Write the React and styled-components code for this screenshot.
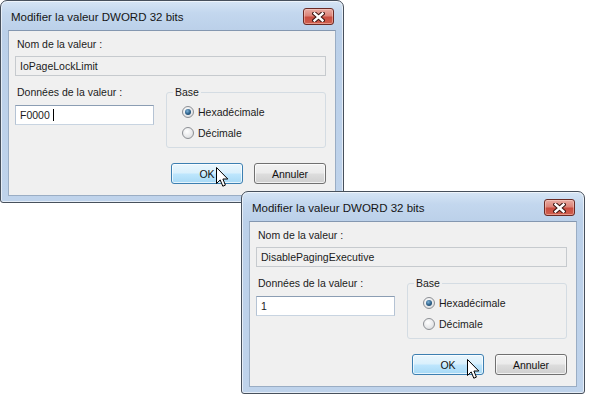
import React from "react";
import styled, { createGlobalStyle } from "styled-components";

const GlobalStyle = createGlobalStyle`
  html, body {
    margin: 0;
    padding: 0;
    background: #ffffff;
  }
  body {
    font-family: "Liberation Sans", Arial, sans-serif;
  }
`;

const Desktop = styled.div`
  position: relative;
  width: 589px;
  height: 399px;
  overflow: hidden;
  background: #ffffff;
`;

const Window = styled.div`
  position: absolute;
  left: ${(p) => p.$x}px;
  top: ${(p) => p.$y}px;
  width: 344px;
  height: 203px;
  box-sizing: border-box;
  border: 1px solid #47505c;
  border-radius: 7px 7px 3px 3px;
  background: linear-gradient(
    180deg,
    #d6e5f5 0px,
    #c3d7ee 12px,
    #bbd0e9 30px,
    #bfd3eb 100%
  );
  box-shadow: inset 0 0 0 1px rgba(255, 255, 255, 0.6);
  display: flex;
  flex-direction: column;
  padding: 0 7px 6px;
`;

const TitleBar = styled.div`
  height: 29px;
  flex: none;
  display: flex;
  align-items: flex-start;
  justify-content: space-between;
`;

const Title = styled.div`
  padding: 9px 0 0 3px;
  font-size: 11.5px;
  line-height: 14px;
  color: #151515;
  white-space: nowrap;
`;

const CloseButton = styled.div`
  margin: 7px 2px 0 0;
  width: 31px;
  height: 17px;
  box-sizing: border-box;
  border: 1px solid #6b2a24;
  border-radius: 3px;
  background: linear-gradient(
    180deg,
    #e9aca3 0%,
    #dc8479 45%,
    #c94d40 55%,
    #d0604f 100%
  );
  box-shadow: inset 0 0 0 1px rgba(255, 220, 210, 0.45);
  display: flex;
  align-items: center;
  justify-content: center;
`;

const Client = styled.div`
  flex: 1;
  background: #f0f0f0;
  border: 1px solid #9aadc4;
  border-top-color: #8497b0;
  padding: 7px 9px 0 6px;
  display: flex;
  flex-direction: column;
  font-size: 10.5px;
  color: #1b1b1b;
`;

const Label = styled.div`
  line-height: 13px;
  height: 13px;
  padding-left: 2px;
  white-space: nowrap;
`;

const NameField = styled.div`
  margin-top: 5px;
  height: 20px;
  box-sizing: border-box;
  border: 1px solid #c6cace;
  background: #f0f0f0;
  padding: 0 4px;
  display: flex;
  align-items: center;
  white-space: nowrap;
`;

const MiddleRow = styled.div`
  margin-top: 10px;
  display: flex;
  justify-content: space-between;
  align-items: flex-start;
`;

const DataColumn = styled.div`
  width: 139px;
  display: flex;
  flex-direction: column;
`;

const ValueInput = styled.div`
  margin-top: 6px;
  height: 20px;
  box-sizing: border-box;
  border: 1px solid;
  border-color: #8b9db3 #b5c3d4 #c8d4e1 #b5c3d4;
  background: #ffffff;
  padding: 0 4px;
  display: flex;
  align-items: center;
`;

const Caret = styled.span`
  display: inline-block;
  width: 1px;
  height: 12px;
  margin-left: 3px;
  background: #000000;
`;

const GroupBox = styled.fieldset`
  width: 160px;
  box-sizing: border-box;
  margin: 0;
  padding: 2px 0 4px 6px;
  border: 1px solid #d4dce3;
  border-radius: 3px;
  min-inline-size: 0;
`;

const Legend = styled.legend`
  padding: 0 2px;
  line-height: 13px;
  font-size: 10.5px;
`;

const RadioRow = styled.div`
  height: 21px;
  margin-left: 9px;
  display: flex;
  align-items: center;
  gap: 4px;
  white-space: nowrap;
`;

const RadioDot = styled.span`
  width: 12px;
  height: 12px;
  box-sizing: border-box;
  border-radius: 50%;
  border: 1px solid #8c8f94;
  background: radial-gradient(circle at 40% 35%, #ffffff 0%, #e6e7e9 60%, #cfd1d4 100%);
  display: flex;
  align-items: center;
  justify-content: center;

  &::after {
    content: "";
    width: 6px;
    height: 6px;
    border-radius: 50%;
    display: ${(p) => (p.$checked ? "block" : "none")};
    background: radial-gradient(circle at 40% 35%, #7fb3d9 0%, #2a5d86 55%, #173a57 100%);
  }
`;

const ButtonRow = styled.div`
  margin-top: 15px;
  display: flex;
  justify-content: flex-end;
  gap: 11px;
`;

const Button = styled.div`
  position: relative;
  width: 72px;
  height: 21px;
  box-sizing: border-box;
  border: 1px solid ${(p) => (p.$active ? "#3c7fb1" : "#707070")};
  border-radius: 3px;
  background: ${(p) =>
    p.$active
      ? "linear-gradient(180deg, #eaf6fd 0%, #d9f0fc 48%, #bee6fd 52%, #a7d9f5 100%)"
      : "linear-gradient(180deg, #f2f2f2 0%, #ebebeb 48%, #dddddd 52%, #cfcfcf 100%)"};
  box-shadow: inset 0 0 0 1px rgba(255, 255, 255, 0.7);
  display: flex;
  align-items: center;
  justify-content: center;
  font-size: 10.5px;
  color: #111111;
`;

const Pointer = styled.svg`
  position: absolute;
  left: ${(p) => p.$x}px;
  top: ${(p) => p.$y}px;
  overflow: visible;
`;

const CloseGlyph = () => (
  <svg width="13" height="10" viewBox="0 0 13 10">
    <path d="M2.5 1.5 L10.5 8.5 M10.5 1.5 L2.5 8.5" stroke="#3a1410" strokeWidth="4.4" strokeLinecap="square" />
    <path d="M2.5 1.5 L10.5 8.5 M10.5 1.5 L2.5 8.5" stroke="#ffffff" strokeWidth="2.4" strokeLinecap="square" />
  </svg>
);

const ArrowCursor = ({ x, y }) => (
  <Pointer $x={x} $y={y} width="13" height="21" viewBox="0 0 13 21">
    <path
      d="M0.5 0.5 L0.5 16.5 L4.2 12.9 L6.8 19.2 L9.4 18.1 L6.9 12 L11.8 12 Z"
      fill="#ffffff"
      stroke="#000000"
      strokeWidth="1"
      strokeLinejoin="miter"
    />
  </Pointer>
);

const DwordDialog = ({ x, y, name, value, caret, cursor }) => (
  <Window $x={x} $y={y}>
    <TitleBar>
      <Title>Modifier la valeur DWORD 32 bits</Title>
      <CloseButton>
        <CloseGlyph />
      </CloseButton>
    </TitleBar>
    <Client>
      <Label>Nom de la valeur :</Label>
      <NameField>{name}</NameField>
      <MiddleRow>
        <DataColumn>
          <Label>Données de la valeur :</Label>
          <ValueInput>
            {value}
            {caret && <Caret />}
          </ValueInput>
        </DataColumn>
        <GroupBox>
          <Legend>Base</Legend>
          <RadioRow>
            <RadioDot $checked />
            Hexadécimale
          </RadioRow>
          <RadioRow>
            <RadioDot />
            Décimale
          </RadioRow>
        </GroupBox>
      </MiddleRow>
      <ButtonRow>
        <Button $active>OK</Button>
        <Button>Annuler</Button>
      </ButtonRow>
    </Client>
    <ArrowCursor x={cursor[0]} y={cursor[1]} />
  </Window>
);

const App = () => {
  return (
    <Desktop>
      <GlobalStyle />
      <DwordDialog
        x={0}
        y={0}
        name="IoPageLockLimit"
        value="F0000"
        caret
        cursor={[215, 166]}
      />
      <DwordDialog
        x={241}
        y={191}
        name="DisablePagingExecutive"
        value="1"
        cursor={[225, 167]}
      />
    </Desktop>
  );
};

export default App;
